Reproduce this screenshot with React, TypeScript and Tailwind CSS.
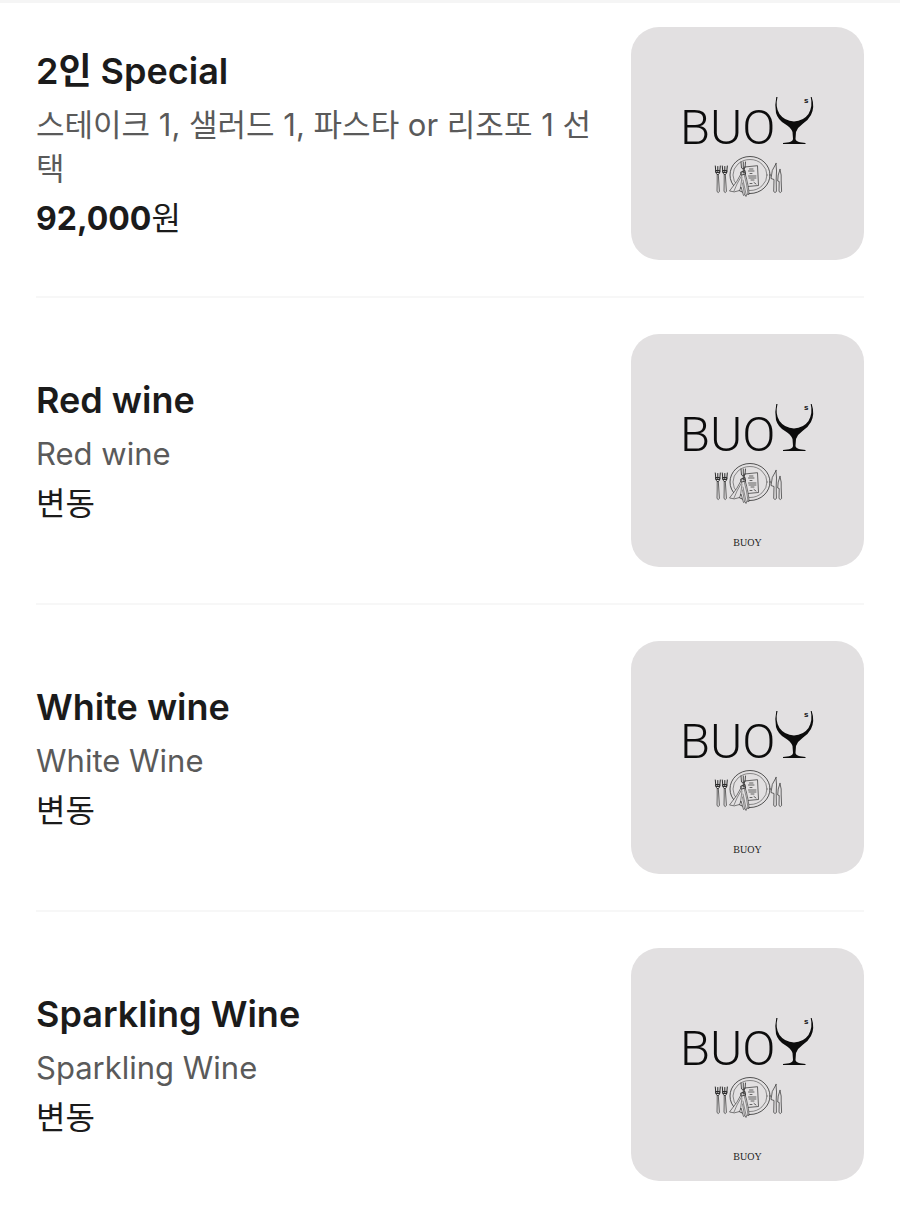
import React from 'react';

interface MenuItem {
  name: string;
  description: string;
  // Fixed amount in won, or undefined when the price varies
  price?: number;
  caption?: string;
}

const menuItems: MenuItem[] = [
  { name: '2인 Special', description: '스테이크 1, 샐러드 1, 파스타 or 리조또 1 선택', price: 92000 },
  { name: 'Red wine', description: 'Red wine', caption: 'BUOY' },
  { name: 'White wine', description: 'White Wine', caption: 'BUOY' },
  { name: 'Sparkling Wine', description: 'Sparkling Wine', caption: 'BUOY' },
];

function Fork({ x }: { x: number }) {
  return (
    <g transform={`translate(${x} 0)`}>
      <path d="M.3 1 .8 6.500Q1.300 9 2.300 9.500H3.300Q4.500 9 4.800 6.500L5.300 1M2.800 1.500V7M1 5.500H4.800V7.500H1.200Z" strokeWidth="1" />
      <path d="M2.200 9.500 2.200 17 2 26.500Q3.200 28.500 4.400 26.500L3.800 17 3.300 9.500" strokeWidth=".7" />
    </g>
  );
}

// Fork, plate with napkin and card, knives
function PlaceSetting() {
  return (
    <g transform="translate(84 138)" fill="none" stroke="#2c2c2c" strokeWidth=".8" strokeLinecap="round" strokeLinejoin="round">
      <Fork x={0} />
      <Fork x={7} />
      <ellipse cx="35" cy="10" rx="20" ry="18.500" strokeWidth=".8" />
      <ellipse cx="35" cy="10" rx="17" ry="15.500" strokeWidth=".5" />
      <path d="M29.500 2 42.500 .7 43.500 20.500 32.500 21.500Z" fill="#e2e0e1" strokeWidth=".7" />
      <path d="M34.500 4H38M33.500 6H39M35 8.500H37M33.500 11H41M34 13H41M36 15H39M35 18.500H37M39 17.500 41 19" strokeWidth=".7" />
      <path d="M27 7Q23 16 14.500 26Q19 28 24.500 25.500L26 22 28.500 30.500 30 29.500 31 31.500 32 29 34 29.500Q34 22 30 8Z" fill="#e2e0e1" strokeWidth=".6" />
      <path d="M27 10 22 19 19 26M27 12 25.500 23M29 9 31.500 19 33 29M28 15 31 29M27.500 18 29.500 29" strokeWidth=".5" />
      <path d="M26-3 26.500 3Q28 5 30 3L30.500-3M28.300-3V8M26 7 30 5.500 30.500 9 26.500 10Z" />
      <path d="M61-1.500Q56 5 56 13.500L59 14.500 58.700 26.500Q60 28.500 61.400 26.500L61.200 14Q62 6 61-1.500Z" strokeWidth=".7" />
      <path d="M65 4.500Q62.500 10 62.700 16L64.200 16.500 64 26.500Q65.300 28.500 66.600 26.500L66.200 16Q66.800 10 65 4.500Z" strokeWidth=".7" />
    </g>
  );
}

function WineGlass() {
  return (
    <path
      d="M146.500 70Q144 80 148.500 87Q153.500 94 163 94.500Q172.500 94 177.500 87Q182 79 179.700 70L180.700 70Q184 80 180 88Q177 93.500 171.500 97Q167 100 165 105L164.500 112Q165 114.500 169 115.200L174.500 116V117H152V116L158 115.200Q161.500 114.500 162 112L161.500 105Q159.500 100 154 97Q147 93 145 86Q143.500 78 145.300 70Z"
      fill="#0c0c0c"
    />
  );
}

function BuoyArtwork() {
  return (
    <svg viewBox="0 0 233 233" className="h-full w-full" role="img" aria-label="BUOY's">
      <text x="49" y="117" fontSize="49" fill="#0c0c0c" className="font-['Roboto',sans-serif] font-light">
        BUO
      </text>
      <WineGlass />
      <text x="173" y="76" fontSize="8" fill="#0c0c0c" className="font-['Liberation_Sans',sans-serif] font-bold">
        s
      </text>
      <PlaceSetting />
    </svg>
  );
}

function Thumbnail({ caption }: { caption?: string }) {
  return (
    <div className="relative size-[233px] shrink-0 overflow-hidden rounded-[28px] bg-[#e2e0e1]">
      <BuoyArtwork />
      {caption && (
        <span className="absolute inset-x-0 bottom-4 text-center font-['Liberation_Serif',serif] text-[10px] leading-4 text-[#222]">
          {caption}
        </span>
      )}
    </div>
  );
}

function MenuRow({ item }: { item: MenuItem }) {
  return (
    <li className="flex items-center gap-9 border-b-2 border-[#f7f7f7] py-9 first:pt-6 last:border-b-0">
      <div className="min-w-0 flex-1">
        <h2 className="text-[36px] leading-[48px] font-semibold text-[#1b1b1b]">{item.name}</h2>
        <p className="mt-2 text-[31px] leading-[44px] text-[#5a5a5a]">{item.description}</p>
        <p className="mt-1.5 text-[32px] leading-[44px] text-[#1b1b1b]">
          {item.price !== undefined ? (
            <>
              <strong className="font-bold">{item.price.toLocaleString('en-US')}</strong>원
            </>
          ) : (
            '변동'
          )}
        </p>
      </div>
      <Thumbnail caption={item.caption} />
    </li>
  );
}

export default function App() {
  return (
    <main className="min-h-screen border-t-3 border-[#f5f5f5] bg-white font-['Inter','Noto_Sans_CJK_KR',sans-serif]">
      <ul className="px-9">
        {menuItems.map((item) => (
          <MenuRow key={item.name} item={item} />
        ))}
      </ul>
    </main>
  );
}
